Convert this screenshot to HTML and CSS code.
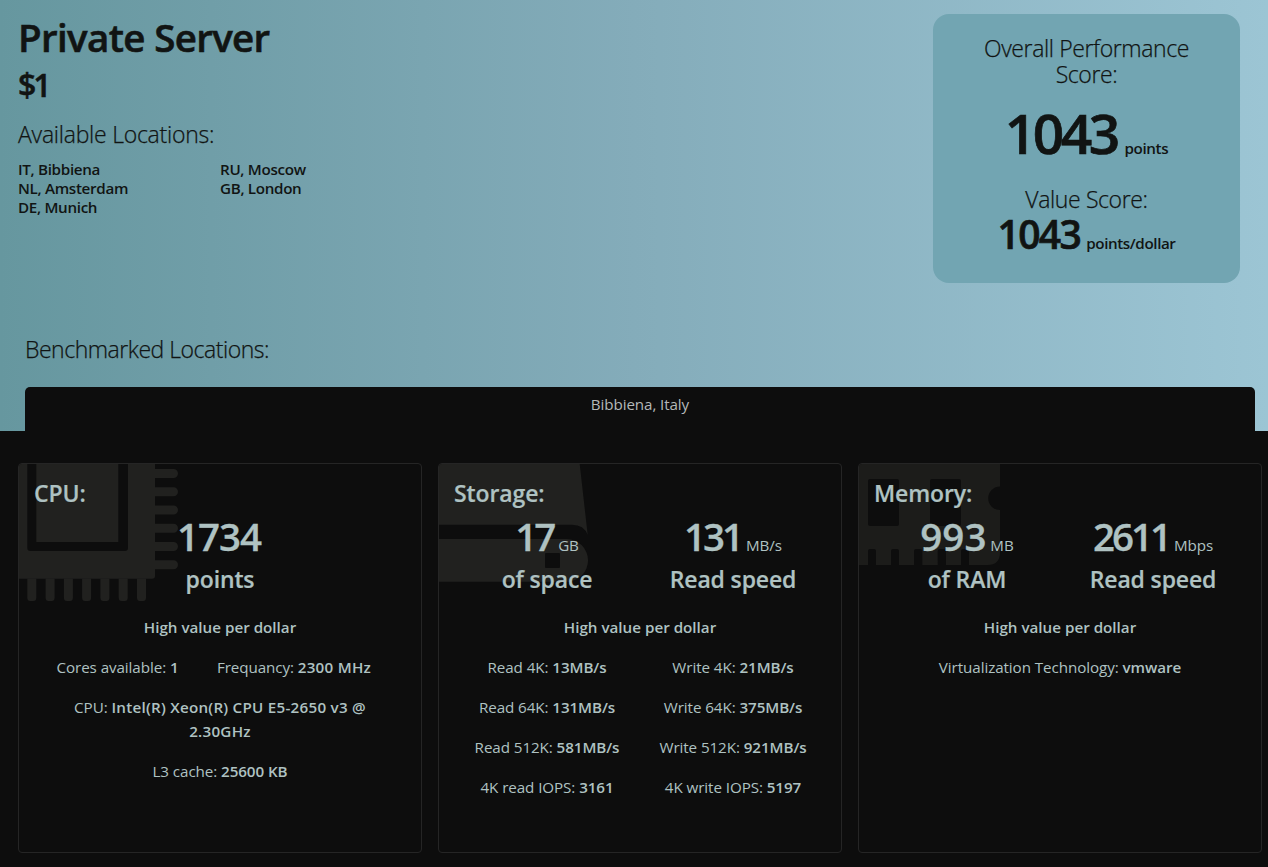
FILE: index.html
```
<!DOCTYPE html>
<html lang="en">
<head>
<meta charset="utf-8">
<title>Private Server</title>
<link rel="stylesheet" href="styles.css">
</head>
<body>
<header class="hero">
  <div class="hero-top">
    <div class="plan">
      <h1 class="plan-name">Private Server</h1>
      <div class="plan-price">$1</div>
      <h2 class="heading">Available Locations:</h2>
      <ul class="places">
        <li>IT, Bibbiena</li>
        <li>NL, Amsterdam</li>
        <li>DE, Munich</li>
        <li>RU, Moscow</li>
        <li>GB, London</li>
      </ul>
    </div>
    <aside class="score">
      <h2 class="heading score-title">Overall Performance Score:</h2>
      <div class="score-line"><span class="score-big">1043</span> <span class="score-unit">points</span></div>
      <h2 class="heading score-title">Value Score:</h2>
      <div class="score-line value"><span class="score-mid">1043</span> <span class="score-unit">points/dollar</span></div>
    </aside>
  </div>
  <div class="bench">
    <h2 class="heading">Benchmarked Locations:</h2>
    <div class="tab">Bibbiena, Italy</div>
  </div>
</header>
<main class="cards">
  <section class="card">
    <svg class="art" width="160" height="140" viewBox="0 0 160 140">
      <path fill-rule="evenodd" d="M0 0H136V112Q136 114.7 133 114.7H0ZM8.3 0V84Q8.3 87 11.3 87H106Q109 87 109 84V0H99.3V78H17.3V0Z"/>
      <path d="M136 5h18.5a4.5 4.5 0 0 1 0 9H136zM136 23.2h18.5a4.5 4.5 0 0 1 0 9H136zM136 41.5h18.5a4.5 4.5 0 0 1 0 9H136zM136 59.8h18.5a4.5 4.5 0 0 1 0 9H136zM136 78h18.5a4.5 4.5 0 0 1 0 9H136zM136 96.3h18.5a4.5 4.5 0 0 1 0 9H136z"/>
      <path d="M8.3 114.5h9v19q0 3.5-3 3.5h-3q-3 0-3-3.500zM26.600 114.500h9v19q0 3.500-3 3.500h-3q-3 0-3-3.500zM44.900 114.500h9v19q0 3.500-3 3.500h-3q-3 0-3-3.500zM63.100 114.500h9v19q0 3.500-3 3.500h-3q-3 0-3-3.500zM81.400 114.500h9v19q0 3.500-3 3.500h-3q-3 0-3-3.500zM99.700 114.500h9v19q0 3.500-3 3.500h-3q-3 0-3-3.500zM118 114.500h9v19q0 3.500-3 3.500h-3q-3 0-3-3.500z"/>
    </svg>
    <h3 class="card-title">CPU:</h3>
    <div class="stats">
      <div class="stat"><div class="figure"><span class="number snug">1734</span></div><div class="caption">points</div></div>
    </div>
    <p class="verdict">High value per dollar</p>
    <div class="row uneven"><div>Cores available: <b>1</b></div><div>Frequancy: <b class="loose">2300 MHz</b></div></div>
    <div class="row wide"><div>CPU: <b class="loose">Intel(R) Xeon(R) CPU E5-2650 v3 @ 2.30GHz</b></div></div>
    <div class="row"><div>L3 cache: <b>25600 KB</b></div></div>
  </section>
  <section class="card">
    <svg class="art" width="160" height="140" viewBox="0 0 160 140">
      <path d="M0 0H140.700L148.700 71Q145 60.700 133 60.700H0Z"/>
      <path fill-rule="evenodd" d="M0 75H127.700a21.350 21.350 0 0 1 0 42.700H0ZM107 89q-1 0-1 1v13q0 1 1 1h13q1 0 1-1V90q0-1-1-1z"/>
    </svg>
    <h3 class="card-title">Storage:</h3>
    <div class="stats">
      <div class="stat"><div class="figure"><span class="number tight">17</span> <span class="unit">GB</span></div><div class="caption">of space</div></div>
      <div class="stat"><div class="figure"><span class="number tight">131</span> <span class="unit">MB/s</span></div><div class="caption">Read speed</div></div>
    </div>
    <p class="verdict">High value per dollar</p>
    <div class="row"><div>Read 4K: <b>13MB/s</b></div><div>Write 4K: <b>21MB/s</b></div></div>
    <div class="row"><div>Read 64K: <b>131MB/s</b></div><div>Write 64K: <b>375MB/s</b></div></div>
    <div class="row"><div>Read 512K: <b>581MB/s</b></div><div>Write 512K: <b>921MB/s</b></div></div>
    <div class="row"><div>4K read IOPS: <b>3161</b></div><div>4K write IOPS: <b>5197</b></div></div>
  </section>
  <section class="card">
    <svg class="art art-dim" width="160" height="140" viewBox="0 0 160 140">
      <path fill-rule="evenodd" d="M0 0H141V22.500a11.800 11.800 0 0 0 0 23.600V88q0 13-12.500 13H110V87q0-2-2-2h-4q-2 0-2 2v14H87V87q0-2-2-2h-4.300q-2 0-2 2v14H63.300V87q0-2-2-2H57q-2 0-2 2v14H40V87q0-2-2-2h-4q-2 0-2 2v14H17V87q0-2-2-2h-4q-2 0-2 2v14H0ZM11 15q-2 0-2 2v43q0 2 2 2h27q2 0 2-2V17q0-2-2-2zM73 15q-2 0-2 2v43q0 2 2 2h27q2 0 2-2V17q0-2-2-2z"/>
    </svg>
    <h3 class="card-title">Memory:</h3>
    <div class="stats">
      <div class="stat"><div class="figure"><span class="number">993</span> <span class="unit">MB</span></div><div class="caption">of RAM</div></div>
      <div class="stat"><div class="figure"><span class="number tight">2611</span> <span class="unit">Mbps</span></div><div class="caption">Read speed</div></div>
    </div>
    <p class="verdict">High value per dollar</p>
    <div class="row"><div>Virtualization Technology: <b>vmware</b></div></div>
  </section>
</main>
</body>
</html>
```

FILE: styles.css
```
* { box-sizing: border-box; }

body {
  margin: 0;
  height: 867px;
  overflow: hidden;
  background: #0d0d0d;
  color: #afc2c2;
  font-family: "Open Sans", "Noto Sans", sans-serif;
  font-size: 15.2px;
  line-height: 24px;
}

h1, h2, h3, p, ul { margin: 0; padding: 0; }

.hero {
  height: 431px;
  background: linear-gradient(90deg, #66979f, #84acba 50%, #9cc5d4);
  color: #111413;
}

.hero-top {
  display: flex;
  justify-content: space-between;
  height: 331px;
  padding: 14px 28px 0 18px;
}

.plan { width: 404px; }

.plan-name {
  font-size: 38.5px;
  font-weight: 600;
  line-height: 46px;
  letter-spacing: -0.65px;
  -webkit-text-stroke: 0.6px;
}

.plan-price {
  padding-top: 2px;
  font-size: 32px;
  font-weight: 600;
  line-height: 46px;
  letter-spacing: -3px;
  -webkit-text-stroke: 0.5px;
}

.heading {
  font-size: 23px;
  font-weight: 300;
  line-height: 26px;
  letter-spacing: -0.48px;
  -webkit-text-stroke: 0.25px;
}

.plan .heading { margin-top: 13px; letter-spacing: -0.25px; }

.places {
  columns: 2;
  column-gap: 0;
  margin-top: 13px;
  list-style: none;
  font-weight: 600;
  font-size: 15.2px;
  line-height: 19px;
  letter-spacing: -0.32px;
}

.score {
  width: 307px;
  height: 269px;
  padding: 21px 32px 0;
  border-radius: 16px;
  background: #72a5b2;
  text-align: center;
}

.score-title { letter-spacing: -0.38px; }
.score-line { height: 99px; line-height: 92px; font-weight: 600; }
.score-line.value { height: 46px; line-height: 43px; }
.score-big, .score-mid { font-weight: 600; -webkit-text-stroke: 0.7px; }
.score-big { margin-right: 4px; font-size: 55px; letter-spacing: -3.5px; }
.score-mid { margin-right: 2px; font-size: 39px; letter-spacing: -1.6px; }
.score-unit { letter-spacing: -0.4px; }

.bench { padding: 5px 13px 0 25px; }

.tab {
  height: 44px;
  margin-top: 25px;
  padding-top: 5px;
  border-radius: 5px 5px 0 0;
  background: #0d0d0d;
  color: #b4b8b8;
  letter-spacing: -0.1px;
  text-align: center;
}

.cards {
  display: grid;
  grid-template-columns: repeat(3, 404px);
  gap: 16px;
  padding: 32px 0 0 18px;
}

.card {
  position: relative;
  height: 390px;
  padding: 14px 15px;
  overflow: hidden;
  border: 1px solid #252525;
  border-radius: 4px;
  text-align: center;
}

.art {
  position: absolute;
  top: 0;
  left: 0;
  fill: #21211f;
}

.art-dim { fill: #1c1c1a; }

.card-title, .stats { position: relative; }

.card-title {
  font-size: 23px;
  font-weight: 600;
  line-height: 30px;
  text-align: left;
  letter-spacing: -0.1px;
  -webkit-text-stroke: 0.2px;
}

.stats, .row { display: flex; }
.stat, .row > div { flex: 1; }

.figure { height: 56px; line-height: 56px; white-space: nowrap; }
.number { font-size: 38.5px; font-weight: 600; -webkit-text-stroke: 0.3px; }
.number.snug { margin-right: 2px; letter-spacing: -1px; }
.number.tight { margin-right: 1px; letter-spacing: -3px; }
.unit { letter-spacing: -0.1px; }
.caption { font-size: 23px; font-weight: 600; line-height: 30px; letter-spacing: -0.15px; -webkit-text-stroke: 0.2px; }
.verdict { margin-top: 21px; font-weight: 600; }
.row { margin-top: 16px; letter-spacing: -0.08px; }
.row b { font-weight: 600; }
.row .loose { letter-spacing: 0.25px; }
.row.uneven { padding-right: 19px; }
.row.uneven > div:first-child { flex: 0 0 167px; }
.row.wide { padding: 0 36px; }
```
